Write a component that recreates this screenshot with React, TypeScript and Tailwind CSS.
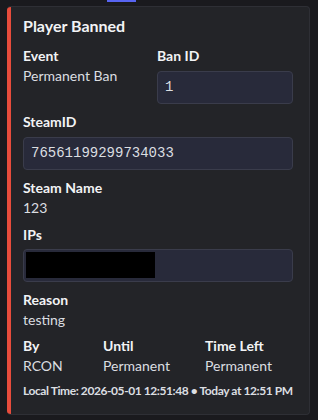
const sans = "font-['Lato',_'Liberation_Sans',_sans-serif]";
const mono = "font-['Liberation_Mono',_'DejaVu_Sans_Mono',_monospace]";

const Label = ({ children }: { children: React.ReactNode }) => (
  <div className="h-[18px] text-[14px] leading-[18px] font-bold text-[#f2f3f5]">{children}</div>
);

const Value = ({ children }: { children: React.ReactNode }) => (
  <div className="mt-[2px] h-[18px] text-[14px] leading-[18px] text-[#dbdee1]">{children}</div>
);

const CodeBox = ({ children }: { children?: React.ReactNode }) => (
  <div
    className={`mt-[6px] flex h-[33px] items-center rounded-[4px] border border-[#3a3c4b] bg-[#282a3a] px-[7px] text-[14px] text-[#dbdee1] ${mono}`}
  >
    {children}
  </div>
);

export default function App() {
  return (
    <div className={`min-h-[420px] w-[318px] bg-[#1a1a1e] ${sans}`}>
      {/* leftover of the message above */}
      <div className="h-[6px]">
        <div className="ml-[107px] h-[2px] w-[29px] bg-[#5865f2]" />
      </div>

      <div className="ml-[7px] flex w-[303px] overflow-hidden rounded-[4px] border border-l-0 border-[#2e2f35] bg-[#232428]">
        <div className="w-[4px] shrink-0 bg-[#e74c3c]" />
        <div className="min-w-0 flex-1 pb-[15px] pl-[12px] pr-[16px] pt-[8px]">
          <div className="h-[22px] text-[16px] leading-[22px] font-bold text-[#f2f3f5]">Player Banned</div>

          <div className="mt-[10px] grid grid-cols-[134px_1fr]">
            <div>
              <Label>Event</Label>
              <Value>Permanent Ban</Value>
            </div>
            <div>
              <Label>Ban ID</Label>
              <CodeBox>1</CodeBox>
            </div>
          </div>

          <div className="mt-[9px]">
            <Label>SteamID</Label>
            <CodeBox>76561199299734033</CodeBox>
          </div>

          <div className="mt-[9px]">
            <Label>Steam Name</Label>
            <Value>123</Value>
          </div>

          <div className="mt-[9px]">
            <Label>IPs</Label>
            <div className="mt-[5px] h-[33px] rounded-[4px] border border-[#3a3c4b] bg-[#282a3a] p-[2px]">
              <div className="h-[26px] w-[129px] bg-black" />
            </div>
          </div>

          <div className="mt-[9px]">
            <Label>Reason</Label>
            <Value>testing</Value>
          </div>

          <div className="mt-[8px] grid grid-cols-[80px_102px_1fr]">
            <div>
              <Label>By</Label>
              <Value>RCON</Value>
            </div>
            <div>
              <Label>Until</Label>
              <Value>Permanent</Value>
            </div>
            <div>
              <Label>Time Left</Label>
              <Value>Permanent</Value>
            </div>
          </div>

          <div className="mt-[8px] h-[16px] whitespace-nowrap text-[12px] leading-[16px] font-bold tracking-[-0.42px] text-[#dbdee1]">
            Local Time: 2026-05-01 12:51:48 • Today at 12:51 PM
          </div>
        </div>
      </div>
    </div>
  );
}
